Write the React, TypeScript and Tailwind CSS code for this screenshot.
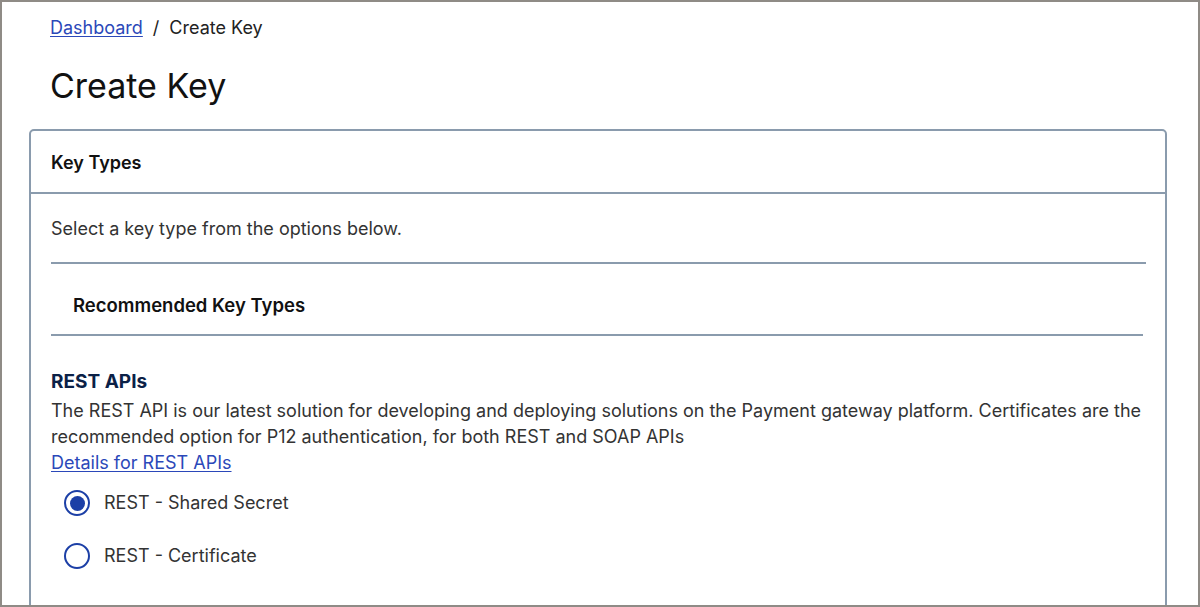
import React from "react";

function Radio({ checked, label }: { checked: boolean; label: string }) {
  return (
    <label className="flex items-center h-[26px]">
      <span className="w-[26px] h-[26px] rounded-full border-[2.5px] border-[#1c3fa6] flex items-center justify-center shrink-0">
        {checked && <span className="w-[15px] h-[15px] rounded-full bg-[#1c3fa6]" />}
      </span>
      <span className="ml-[14px] text-[18px] leading-[26px] text-[#333333]">{label}</span>
    </label>
  );
}

export default function App() {
  return (
    <div
      className="w-[1200px] h-[607px] border-2 border-[#8f8b86] bg-white overflow-hidden"
      style={{ fontFamily: "Inter, 'Noto Sans', sans-serif" }}
    >
      <div className="pl-[48px] pt-[14px] h-[24px] box-content flex items-center text-[18px] leading-[24px]">
        <a className="text-[#2b48b9] underline underline-offset-2 decoration-1">Dashboard</a>
        <span className="mx-[10px] text-[#222]">/</span>
        <span className="text-[#222]">Create Key</span>
      </div>
      <h1 className="pl-[48px] mt-[26px] text-[34px] leading-[40px] text-[#111]">Create Key</h1>
      <div className="ml-[27px] mt-[23px] w-[1138px] border-2 border-[#8a9bad] rounded-[5px] h-[600px]">
        <div className="h-[63px] border-b-2 border-[#8a9bad] pl-[20px] pt-[20px]">
          <div className="text-[18px] leading-[24px] font-semibold text-[#111]">Key Types</div>
        </div>
        <div className="pl-[20px] pr-[18px]">
          <p className="mt-[23px] text-[18px] leading-[24px] text-[#333]">Select a key type from the options below.</p>
          <div className="mt-[21px] h-[2px] bg-[#8a9bad] w-[1095px]" />
          <div className="h-[70px] pt-[29px] pl-[22px]">
            <div className="text-[18.5px] leading-[24px] font-semibold text-[#111]">Recommended Key Types</div>
          </div>
          <div className="h-[2px] bg-[#8a9bad] w-[1092px]" />
          <h3 className="mt-[33px] text-[19px] leading-[26px] font-bold text-[#0b2147]">REST APIs</h3>
          <p className="mt-[3px] text-[18px] leading-[26px] text-[#333]">
            The REST API is our latest solution for developing and deploying solutions on the Payment gateway platform. Certificates are the recommended option for P12 authentication, for both REST and SOAP APIs
          </p>
          <a className="block text-[18px] leading-[26px] text-[#2b48b9] underline underline-offset-2 decoration-1">Details for REST APIs</a>
          <div className="mt-[14px] pl-[13px] flex flex-col gap-[27px]">
            <Radio checked label="REST - Shared Secret" />
            <Radio checked={false} label="REST - Certificate" />
          </div>
        </div>
      </div>
    </div>
  );
}
